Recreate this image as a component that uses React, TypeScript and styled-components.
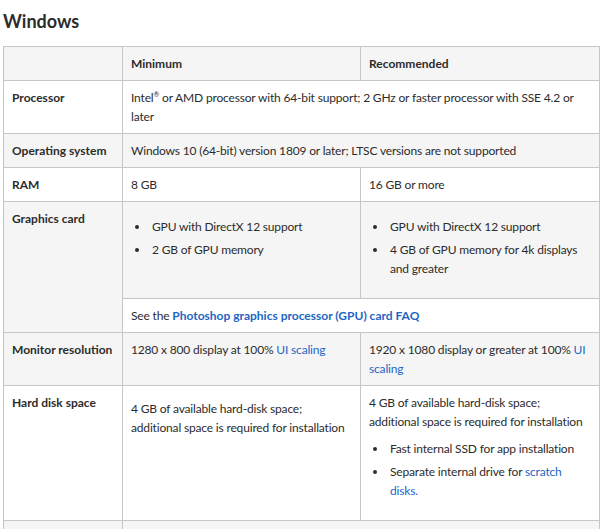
import React from "react";
import styled, { createGlobalStyle } from "styled-components";

const Global = createGlobalStyle`
  html, body { margin: 0; padding: 0; background: #ffffff; }
  body {
    font-family: Lato, "Open Sans", "Liberation Sans", sans-serif;
    color: #2c2c2c;
  }
`;

const Page = styled.main`
  padding: 9px 0 0 3px;
  width: 596px;
`;

const Heading = styled.h2`
  margin: 0 0 13px;
  font-size: 18px;
  line-height: 24px;
  font-weight: 700;
  color: #2c2c2c;
`;

const Table = styled.table`
  width: 596px;
  table-layout: fixed;
  border-collapse: collapse;
  font-size: 12px;
  line-height: 19px;
`;

const Col = styled.col<{ $w: number }>`
  width: ${(p) => p.$w}px;
`;

const Row = styled.tr<{ $shade?: boolean }>`
  background: ${(p) => (p.$shade ? "#f5f5f5" : "#ffffff")};
`;

const Cell = styled.td`
  border: 1px solid #c6c6c6;
  padding: 7px 8px;
  vertical-align: top;
  text-align: left;
  letter-spacing: -0.17px;
`;

const HeadCell = styled.th`
  border: 1px solid #c6c6c6;
  padding: 7px 8px;
  vertical-align: top;
  text-align: left;
  font-weight: 700;
  letter-spacing: 0;
`;

const Link = styled.a<{ $bold?: boolean }>`
  color: #1d66c3;
  text-decoration: none;
  font-weight: ${(p) => (p.$bold ? 700 : 400)};
  letter-spacing: ${(p) => (p.$bold ? "0" : "-0.17px")};
`;

const Reg = styled.sup`
  font-size: 7px;
  line-height: 0;
  vertical-align: 5px;
`;

const List = styled.ul`
  list-style: none;
  margin: 8px 0 13px;
  padding: 0;
`;

const Item = styled.li`
  display: flex;
  align-items: flex-start;
  margin-bottom: 4px;

  &::before {
    content: "";
    flex: none;
    width: 4px;
    height: 4px;
    border-radius: 50%;
    background: #2c2c2c;
    margin: 8px 13px 0 4px;
  }
`;

const Para = styled.p<{ $top?: number }>`
  margin: ${(p) => p.$top ?? 0}px 0 0;
`;

export default function App() {
  return (
    <>
      <Global />
      <Page>
        <Heading>Windows</Heading>
        <Table>
          <colgroup>
            <Col $w={119} />
            <Col $w={238} />
            <Col $w={239} />
          </colgroup>
          <thead>
            <Row $shade>
              <HeadCell />
              <HeadCell>Minimum</HeadCell>
              <HeadCell>Recommended</HeadCell>
            </Row>
          </thead>
          <tbody>
            <Row>
              <HeadCell scope="row">Processor</HeadCell>
              <Cell colSpan={2}>
                Intel<Reg>®</Reg> or AMD processor with 64-bit support; 2 GHz or faster processor with SSE 4.2 or later
              </Cell>
            </Row>
            <Row $shade>
              <HeadCell scope="row">Operating system</HeadCell>
              <Cell colSpan={2}>
                Windows 10 (64-bit) version 1809 or later; LTSC versions are not supported
              </Cell>
            </Row>
            <Row>
              <HeadCell scope="row">RAM</HeadCell>
              <Cell>8 GB</Cell>
              <Cell>16 GB or more</Cell>
            </Row>
            <Row $shade>
              <HeadCell scope="row" rowSpan={2}>Graphics card</HeadCell>
              <Cell>
                <List>
                  <Item><span>GPU with DirectX 12 support</span></Item>
                  <Item><span>2 GB of GPU memory</span></Item>
                </List>
              </Cell>
              <Cell>
                <List>
                  <Item><span>GPU with DirectX 12 support</span></Item>
                  <Item><span>4 GB of GPU memory for 4k displays and greater</span></Item>
                </List>
              </Cell>
            </Row>
            <Row>
              <Cell colSpan={2}>
                See the <Link $bold href="#">Photoshop graphics processor (GPU) card FAQ</Link>
              </Cell>
            </Row>
            <Row $shade>
              <HeadCell scope="row">Monitor resolution</HeadCell>
              <Cell>
                1280 x 800 display at 100% <Link href="#">UI scaling</Link>
              </Cell>
              <Cell>
                1920 x 1080 display or greater at 100% <Link href="#">UI scaling</Link>
              </Cell>
            </Row>
            <Row>
              <HeadCell scope="row">Hard disk space</HeadCell>
              <Cell>
                <Para $top={6}>
                  4 GB of available hard-disk space; additional space is required for installation
                </Para>
              </Cell>
              <Cell>
                <Para>
                  4 GB of available hard-disk space; additional space is required for installation
                </Para>
                <List>
                  <Item><span>Fast internal SSD for app installation</span></Item>
                  <Item>
                    <span>
                      Separate internal drive for <Link href="#">scratch disks.</Link>
                    </span>
                  </Item>
                </List>
              </Cell>
            </Row>
            <Row $shade>
              <HeadCell scope="row">Internet</HeadCell>
              <Cell colSpan={2}>
                Internet connection and registration are necessary for required software activation, validation of subscriptions, and access to online services.
              </Cell>
            </Row>
          </tbody>
        </Table>
      </Page>
    </>
  );
}
